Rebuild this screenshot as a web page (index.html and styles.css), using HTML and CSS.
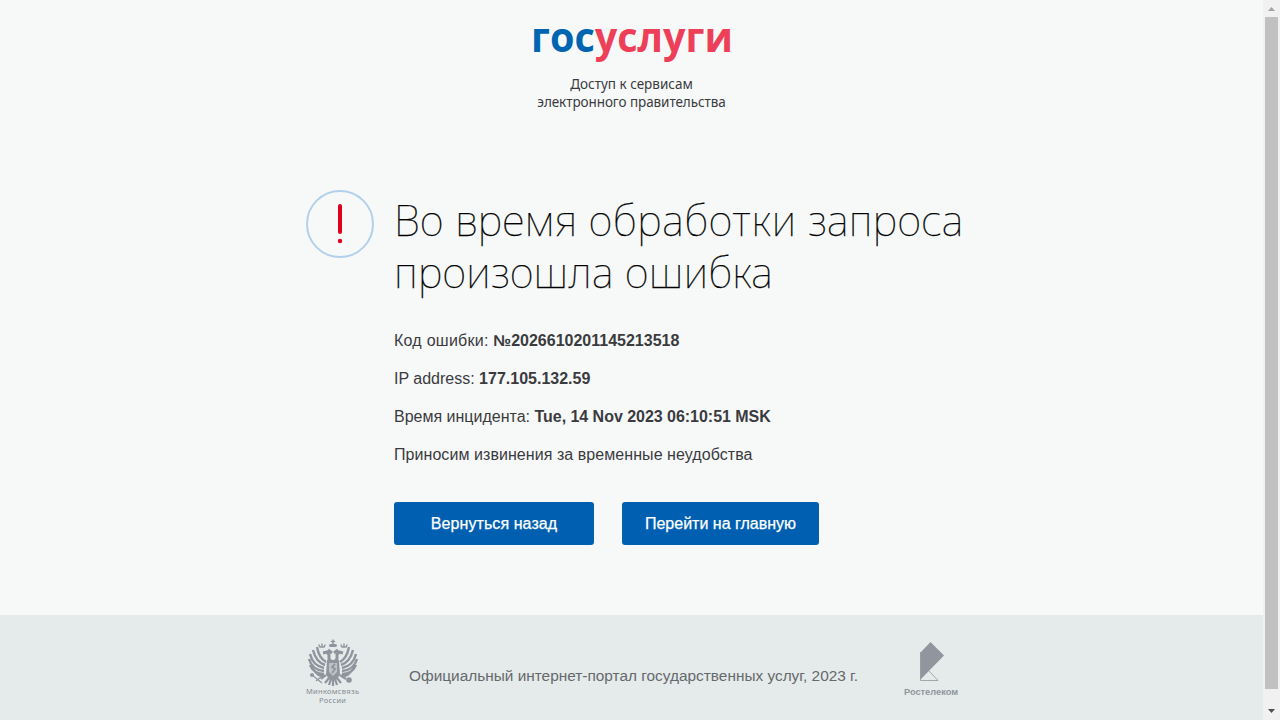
FILE: index.html
```html
<!DOCTYPE html>
<html lang="ru">
<head>
<meta charset="utf-8">
<title>Госуслуги</title>
<link rel="stylesheet" href="styles.css">
</head>
<body>
<div class="page">
  <header class="header">
    <svg class="logo" width="200" height="44" viewBox="0 0 200 44" role="img" aria-label="госуслуги">
      <text class="logo-red" x="-1" y="32" textLength="202" lengthAdjust="spacingAndGlyphs"><tspan class="logo-blue">гос</tspan>услуги</text>
    </svg>
    <div class="slogan"><span class="slogan-a">Доступ к сервисам</span><br><span class="slogan-b">электронного правительства</span></div>
  </header>
  <main class="main">
    <svg class="alert" width="68" height="68" viewBox="0 0 68 68">
      <circle cx="34" cy="34" r="33" fill="none" stroke="#b3d0ea" stroke-width="2"/>
      <path d="M34 16v26" stroke="#e2001f" stroke-width="4" stroke-linecap="round"/>
      <circle cx="34" cy="51" r="2.2" fill="#e2001f"/>
    </svg>
    <div class="content">
      <h1 class="title">Во время <span class="wide">обработки</span> запроса<br>произошла ошибка</h1>
      <p class="info"><span class="label">Код ошибки: </span><b>№2026610201145213518</b></p>
      <p class="info">IP address: <b>177.105.132.59</b></p>
      <p class="info">Время инцидента: <b class="time">Tue, 14 Nov 2023 06:10:51 MSK</b></p>
      <p class="info sorry">Приносим извинения за временные неудобства</p>
      <div class="actions">
        <a class="button back">Вернуться назад</a>
        <a class="button home">Перейти на главную</a>
      </div>
    </div>
  </main>
  <footer class="footer">
    <svg class="ministry" width="54" height="68" viewBox="0 0 54 68">
      <g stroke="#8f959c" fill="none">
        <g stroke-linecap="round">
          <path stroke-width="1.4" d="M27 1v4M25.5 2.5h3"/>
          <path stroke-width="3" d="M24.5 6.5h5"/>
          <path stroke-width="1.4" d="M13 6l1 2h4l1-2M16 5v3M41 6l-1 2h-4l-1-2M38 5v3"/>
        </g>
        <path stroke-width="3" d="M17 14l4-1 2 3v4l4 4M37 14l-4-1-2 3v4l-4 4M22 11l4 3M32 11l-4 3"/>
        <path stroke-width="2.4" d="M20 23q-7-4-9-15M19 26Q10 23 7 11M18 29Q7 27 4 15M18 32Q6 31 3 20M18 35Q8 35 4 26M19 37q-7 1-11-6"/>
        <path stroke-width="2.4" d="M34 23q7-4 9-15M35 26q9-3 12-15M36 29q11-2 14-14M36 32q12-1 15-12M36 35q10 0 14-9M35 37q7 1 11-6"/>
        <path stroke-width="2.2" d="M20 36l-5 4M34 36l6 4M23 39l-4 5M25 40l-2 6M29 40l2 6M31 39l4 5M27 39v8"/>
        <path stroke-width="1.2" d="M6 36l10 8M10 42l5-4"/>
      </g>
      <path d="M21 21h12l1 15-4 5h-6l-4-5z" fill="#8f959c"/>
      <path d="M23 24h8v9l-4 4-4-4z" fill="#bcc3c6"/>
      <path d="M29 25l-3 3 3 2-3 4" fill="none" stroke="#8f959c" stroke-width="1.8"/>
      <circle cx="6" cy="36" r="2" fill="#8f959c"/>
      <circle cx="43" cy="41" r="2.8" fill="#8f959c"/>
      <text class="ministry-text" x="0" y="55" textLength="53">Минкомсвязь</text>
      <text class="ministry-text" x="13" y="64" textLength="27">России</text>
    </svg>
    <p class="copyright">Официальный интернет-портал государственных услуг, 2023 г.</p>
    <svg class="rostelecom" width="56" height="58" viewBox="0 0 56 58">
      <path d="M17.5 10.5L27.5 0 41 13.5 17.5 37.5z" fill="#90969d"/>
      <path d="M17.5 10v28.500h17.500L26 29" fill="none" stroke="#90969d" stroke-width="0.8"/>
      <text class="rostelecom-text" x="1" y="53" textLength="54" lengthAdjust="spacingAndGlyphs">Ростелеком</text>
    </svg>
  </footer>
</div>
<div class="scrollbar">
  <svg width="7" height="4" viewBox="0 0 7 4"><path d="M0 4L3.5 0 7 4z" fill="#a3a3a3"/></svg>
  <div class="thumb"></div>
  <svg width="7" height="4" viewBox="0 0 7 4"><path d="M0 0h7L3.5 4z" fill="#505050"/></svg>
</div>
</body>
</html>
```
FILE: styles.css
```css
* { box-sizing: border-box; }
body {
  margin: 0;
  height: 720px;
  overflow: hidden;
  display: flex;
  background: #f7f9f9;
  color: #3b3b3f;
  font-family: "Liberation Sans", Arial, sans-serif;
}
.page { flex: 1; display: flex; flex-direction: column; }
.header {
  height: 190px;
  padding-top: 20px;
  display: flex;
  flex-direction: column;
  align-items: center;
}
.logo { font: 700 41px "Open Sans", "Noto Sans", sans-serif; overflow: visible; }
.logo-red { fill: #ee3f58; }
.logo-blue { fill: #0065b1; }
.slogan {
  margin-top: 11px;
  text-align: center;
  font: 13.5px/18px "Noto Sans", sans-serif;
}
.slogan-b { letter-spacing: -0.08px; }
.main { height: 425px; padding-left: 306px; display: flex; align-items: flex-start; gap: 20px; }
.alert { flex: none; }
.title {
  margin: 4px 0 27px;
  font: 100 42px/52px "Noto Sans", "Open Sans", sans-serif;
  color: #000;
  white-space: nowrap;
  letter-spacing: 0.37px;
  -webkit-text-stroke: 0.25px #000;
}
.wide { letter-spacing: 0.85px; }
.info { margin: 0; height: 38px; font-size: 16px; line-height: 32px; white-space: nowrap; }
.label { letter-spacing: 0.25px; }
.time { letter-spacing: -0.03px; }
.sorry { letter-spacing: 0.06px; }
.actions { display: flex; gap: 28px; margin-top: 25px; }
.button {
  height: 43px;
  display: flex;
  align-items: center;
  justify-content: center;
  border-radius: 3px;
  background: #005fb0;
  color: #fff;
  font-size: 16px;
  -webkit-text-stroke: 0.25px #fff;
}
.back { width: 200px; letter-spacing: 0.08px; }
.home { width: 197px; }
.footer { height: 105px; background: #e5ebeb; padding: 24px 0 0 306px; display: flex; align-items: flex-start; }
.copyright { width: 450px; margin: 27px 44px 0 49px; font-size: 15.4px; line-height: 20px; color: #66696b; white-space: nowrap; }
.rostelecom { margin-top: 3px; }
.ministry-text { font: 7.5px "Noto Sans", sans-serif; fill: #858b92; }
.rostelecom-text { font: 700 9px "Liberation Sans", sans-serif; fill: #90969d; }
.scrollbar {
  width: 17px;
  height: 720px;
  padding: 7px 0;
  display: flex;
  flex-direction: column;
  align-items: center;
  background: #f1f1f1;
}
.thumb { width: 13px; height: 672px; margin: 6px 0 20px; background: #c1c1c1; }
```
